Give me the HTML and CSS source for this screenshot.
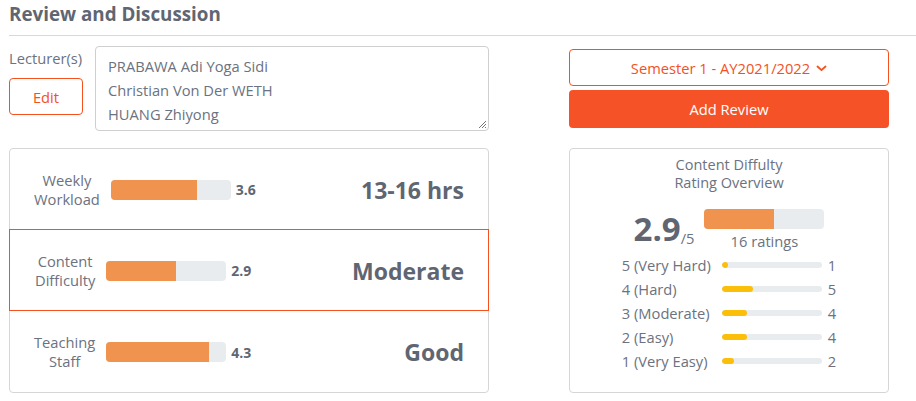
FILE: index.html
```html
<!DOCTYPE html>
<html>
<head>
<meta charset="utf-8">
<link rel="stylesheet" href="styles.css">
</head>
<body>
<div class="page">
  <h2 class="title">Review and Discussion</h2>
  <div class="top">
    <div class="lecturers">
      <div class="lect-side">
        <div class="lect-label">Lecturer(s)</div>
        <button class="btn-edit">Edit</button>
      </div>
      <div class="textarea">PRABAWA Adi Yoga Sidi<br>Christian Von Der WETH<br>HUANG Zhiyong<span class="grip"><svg width="10" height="10" viewBox="0 0 10 10"><path d="M9 2L2 9M9 5L5 9M9 8L8 9" stroke="#777" stroke-width="1" fill="none"/></svg></span></div>
    </div>
    <div class="actions">
      <button class="btn-select">Semester 1 - AY2021/2022 <svg class="chev" width="11" height="7" viewBox="0 0 11 7"><path d="M1.5 1.5L5.5 5.2L9.5 1.5" stroke="#f4511e" stroke-width="1.8" fill="none" stroke-linecap="round" stroke-linejoin="round"/></svg></button>
      <button class="btn-add">Add Review</button>
    </div>
  </div>
  <div class="bottom">
    <div class="card stats">
      <div class="stat">
        <div class="stat-label">Weekly<br>Workload</div>
        <div class="bar"><div class="fill" style="width:72%"></div></div>
        <div class="stat-num">3.6</div>
        <div class="stat-text">13-16 hrs</div>
      </div>
      <div class="stat active">
        <div class="stat-label">Content<br>Difficulty</div>
        <div class="bar"><div class="fill" style="width:58%"></div></div>
        <div class="stat-num">2.9</div>
        <div class="stat-text">Moderate</div>
      </div>
      <div class="stat">
        <div class="stat-label">Teaching<br>Staff</div>
        <div class="bar"><div class="fill" style="width:86%"></div></div>
        <div class="stat-num">4.3</div>
        <div class="stat-text">Good</div>
      </div>
    </div>
    <div class="card overview">
      <div class="ov-title">Content Diffulty<br>Rating Overview</div>
      <div class="ov-score">
        <div class="score"><span class="big">2.9</span><span class="outof">/5</span></div>
        <div class="score-side">
          <div class="bar"><div class="fill" style="width:58%"></div></div>
          <div class="count">16 ratings</div>
        </div>
      </div>
      <div class="dist">
        <div class="drow"><span class="dlabel">5 (Very Hard)</span><div class="dbar"><div class="dfill" style="width:6.25%"></div></div><span class="dnum">1</span></div>
        <div class="drow"><span class="dlabel">4 (Hard)</span><div class="dbar"><div class="dfill" style="width:31.25%"></div></div><span class="dnum">5</span></div>
        <div class="drow"><span class="dlabel">3 (Moderate)</span><div class="dbar"><div class="dfill" style="width:25%"></div></div><span class="dnum">4</span></div>
        <div class="drow"><span class="dlabel">2 (Easy)</span><div class="dbar"><div class="dfill" style="width:25%"></div></div><span class="dnum">4</span></div>
        <div class="drow"><span class="dlabel">1 (Very Easy)</span><div class="dbar"><div class="dfill" style="width:12.5%"></div></div><span class="dnum">2</span></div>
      </div>
    </div>
  </div>
</div>
</body>
</html>
```
FILE: styles.css
```css
* { box-sizing: border-box; }
html, body { margin: 0; padding: 0; background: #fff; }
body {
  font-family: "Open Sans", "Noto Sans", sans-serif;
  color: #6b7280;
  font-size: 14.7px;
  overflow: hidden;
}
.page { padding-left: 9px; width: 916px; }
.title {
  margin: 0;
  font-size: 18.8px;
  font-weight: 700;
  color: #5f6672;
  line-height: 24px;
  padding-top: 2px;
  height: 36px;
  border-bottom: 1px solid #d9d9d9;
}
.top {
  display: flex;
  gap: 80px;
  margin-top: 10px;
}
.lecturers { display: flex; width: 480px; gap: 12px; }
.lect-side { width: 74px; display: flex; flex-direction: column; }
.lect-label { line-height: 20px; padding-top: 2px; white-space: nowrap; }
.btn-edit {
  margin-top: 10px;
  width: 74px;
  height: 37px;
  background: #fff;
  border: 1px solid #f4511e;
  border-radius: 4px;
  color: #f4511e;
  font-family: inherit;
  font-size: 14.7px;
}
.textarea {
  position: relative;
  flex: 1;
  height: 85px;
  border: 1px solid #cfcfcf;
  border-radius: 4px;
  padding: 7px 12px;
  line-height: 24px;
  color: #6b7280;
}
.grip { position: absolute; right: 1px; bottom: 1px; line-height: 0; }
.actions {
  width: 320px;
  padding-top: 3px;
  display: flex;
  flex-direction: column;
  gap: 4px;
}
.btn-select {
  height: 37px;
  background: #fff;
  border: 1px solid #f4511e;
  border-radius: 4px;
  color: #f4511e;
  font-family: inherit;
  font-size: 14.7px;
  display: flex;
  align-items: center;
  justify-content: center;
  gap: 6px;
}
.chev { margin-top: 1px; }
.btn-add {
  height: 38px;
  background: #f55327;
  border: none;
  border-radius: 4px;
  color: #fff;
  font-family: inherit;
  font-size: 14.7px;
}
.bottom {
  display: flex;
  gap: 80px;
  margin-top: 17px;
}
.card {
  border: 1px solid #d6d6d6;
  border-radius: 4px;
  height: 245px;
}
.stats { width: 480px; }
.stat {
  height: 81px;
  display: flex;
  align-items: center;
  padding: 1px 24px 0;
  border-bottom: 1px solid #d6d6d6;
}
.stat:last-child { border-bottom: none; }
.stat.active {
  border: 1px solid #f4511e;
  margin: -1px -1px 0;
  height: 82px;
  padding: 1px 24px 0 25px;
  position: relative;
}
.stat-label {
  text-align: center;
  line-height: 19px;
}
.bar {
  width: 120px;
  height: 20px;
  background: #e9ecef;
  border-radius: 4px;
  overflow: hidden;
}
.stat .bar { margin-left: 11px; }
.fill { height: 100%; background: #f0934f; }
.stat-num {
  margin-left: 5px;
  font-weight: 700;
  font-size: 14px;
  color: #5f6672;
}
.stat-text {
  margin-left: auto;
  font-weight: 700;
  font-size: 23px;
  color: #5f6672;
}
.overview {
  width: 320px;
  display: flex;
  flex-direction: column;
  align-items: center;
}
.ov-title {
  text-align: center;
  line-height: 18px;
  padding-top: 7px;
  font-size: 14.5px;
}
.ov-score {
  display: flex;
  align-items: flex-start;
  gap: 10px;
  margin-top: 17px;
}
.score { display: flex; align-items: baseline; padding-top: 0; }
.big {
  font-size: 33px;
  font-weight: 700;
  color: #5f6672;
  line-height: 40px;
}
.outof { position: relative; top: 3px; }
.score-side { display: flex; flex-direction: column; align-items: center; }
.count { line-height: 24px; }
.dist { margin-top: 0; }
.drow {
  display: flex;
  align-items: center;
  height: 24px;
}
.dlabel { width: 100px; white-space: nowrap; }
.dbar {
  width: 100px;
  height: 6px;
  border-radius: 3px;
  background: #e9ecef;
  overflow: hidden;
}
.dfill { height: 100%; background: #fbbf0a; border-radius: 3px; }
.dnum { margin-left: 6px; }
```
